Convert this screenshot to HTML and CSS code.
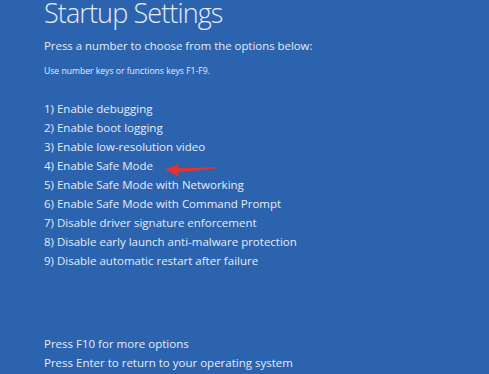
FILE: index.html
```html
<!DOCTYPE html>
<html lang="en">
<head>
    <meta charset="UTF-8">
    <meta name="viewport" content="width=device-width, initial-scale=1.0">
    <title>Startup Settings</title>
    <link rel="stylesheet" href="styles.css">
</head>
<body>
    <div class="screen">
        <h1 class="title">Startup Settings</h1>
        <p class="prompt">Press a number to choose from the options below:</p>
        <p class="hint">Use number keys or functions keys F1-F9.</p>

        <ol class="options">
            <li>1) Enable debugging</li>
            <li>2) Enable boot logging</li>
            <li>3) Enable low-resolution video</li>
            <li class="marked">4) Enable Safe Mode
                <!-- red annotation arrow -->
                <svg class="arrow" width="54" height="16" viewBox="0 0 54 16">
                    <path d="M1 8 L15 1.5 L13.5 6.2 L52 5.2 L52 6.6 L13.5 10.2 L15 14.5 Z" fill="#e8322b"/>
                </svg>
            </li>
            <li>5) Enable Safe Mode with Networking</li>
            <li>6) Enable Safe Mode with Command Prompt</li>
            <li>7) Disable driver signature enforcement</li>
            <li>8) Disable early launch anti-malware protection</li>
            <li>9) Disable automatic restart after failure</li>
        </ol>

        <div class="footer">
            <p>Press F10 for more options</p>
            <p>Press Enter to return to your operating system</p>
        </div>
    </div>
</body>
</html>
```

FILE: styles.css
```css
html, body {
    margin: 0;
    padding: 0;
    background-color: #2c63af;
}

.screen {
    display: flex;
    flex-direction: column;
    min-height: 374px;
    box-sizing: border-box;
    padding: 0 0 2px 44px;
    font-family: "Open Sans", "Noto Sans", sans-serif;
    color: #e4ecf8;
}

.title {
    margin: 0;
    padding-top: 1px;
    font-size: 27px;
    font-weight: 300;
    line-height: 24px;
    letter-spacing: -0.9px;
}

.prompt {
    margin: 11px 0 0;
    font-size: 11.4px;
    line-height: 19px;
}

.hint {
    margin: 9px 0 0;
    font-size: 8.6px;
    line-height: 14px;
}

.options {
    list-style: none;
    margin: 21px 0 0;
    padding: 0;
}

.options li {
    font-size: 11.5px;
    line-height: 19px;
}

.marked {
    position: relative;
}

.arrow {
    position: absolute;
    left: 120px;
    top: 6px;
    filter: blur(0.4px);
}

.footer {
    margin-top: auto;
}

.footer p {
    margin: 0;
    font-size: 11.5px;
    line-height: 19px;
}
```
